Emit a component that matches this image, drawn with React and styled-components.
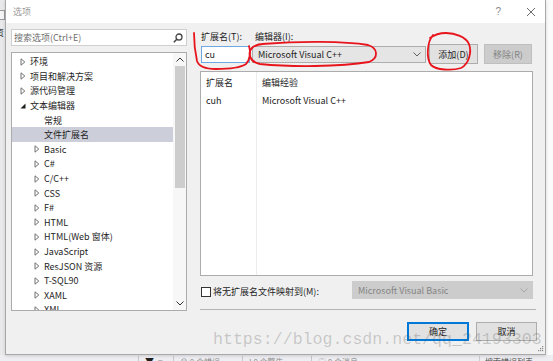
import styled, { createGlobalStyle } from "styled-components";

const UI = `"Noto Sans CJK SC", "Noto Sans", sans-serif`;

const GlobalStyle = createGlobalStyle`
  html, body { margin: 0; padding: 0; }
  body {
    width: 553px;
    height: 361px;
    overflow: hidden;
    background: #f7f7f7;
    font-family: ${UI};
    font-size: 9px;
    color: #1e1e1e;
  }
  #root { position: relative; width: 553px; height: 361px; overflow: hidden; }
`;

const treeItems = [
  { label: "环境", level: 0, arrow: "closed" },
  { label: "项目和解决方案", level: 0, arrow: "closed" },
  { label: "源代码管理", level: 0, arrow: "closed" },
  { label: "文本编辑器", level: 0, arrow: "open" },
  { label: "常规", level: 1 },
  { label: "文件扩展名", level: 1, selected: true },
  { label: "Basic", level: 1, arrow: "closed" },
  { label: "C#", level: 1, arrow: "closed" },
  { label: "C/C++", level: 1, arrow: "closed" },
  { label: "CSS", level: 1, arrow: "closed" },
  { label: "F#", level: 1, arrow: "closed" },
  { label: "HTML", level: 1, arrow: "closed" },
  { label: "HTML(Web 窗体)", level: 1, arrow: "closed" },
  { label: "JavaScript", level: 1, arrow: "closed" },
  { label: "ResJSON 资源", level: 1, arrow: "closed" },
  { label: "T-SQL90", level: 1, arrow: "closed" },
  { label: "XAML", level: 1, arrow: "closed" },
  { label: "XML", level: 1, arrow: "closed" },
];

function Arrow({ kind }) {
  if (kind === "open") {
    return (
      <svg width="6" height="6" viewBox="0 0 6 6">
        <polygon points="5.5,0.5 5.5,5.5 0.5,5.5" fill="#1e1e1e" />
      </svg>
    );
  }
  if (kind === "closed") {
    return (
      <svg width="6" height="8" viewBox="0 0 6 8">
        <polygon points="1,0.8 4.8,4 1,7.2" fill="none" stroke="#717171" strokeWidth="1" />
      </svg>
    );
  }
  return null;
}

const Chevron = ({ color = "#606060", up }) => (
  <svg width="8" height="5" viewBox="0 0 8 5">
    <polyline
      points={up ? "0.5,4.5 4,1 7.5,4.5" : "0.5,0.5 4,4 7.5,0.5"}
      fill="none"
      stroke={color}
      strokeWidth="1"
    />
  </svg>
);

export default function App() {
  return (
    <>
      <GlobalStyle />
      <Backdrop>
        <LeftStrip>
          <StripBox />
          <StripChar>资</StripChar>
        </LeftStrip>
        <Dialog>
          <TitleBar>
            <Title>选项</Title>
            <TitleButtons>
              <TitleGlyph>?</TitleGlyph>
              <svg width="10" height="10" viewBox="0 0 10 10">
                <path d="M1 1 L9 9 M9 1 L1 9" stroke="#6b6b6b" strokeWidth="1" />
              </svg>
            </TitleButtons>
          </TitleBar>
          <Body>
            <LeftPane>
              <Search>
                <Placeholder>搜索选项(Ctrl+E)</Placeholder>
                <svg width="10" height="10" viewBox="0 0 10 10">
                  <circle cx="6" cy="4" r="3" fill="none" stroke="#444" strokeWidth="1.3" />
                  <path d="M3.8 6.2 L0.8 9.2" stroke="#444" strokeWidth="1.6" />
                </svg>
              </Search>
              <Tree>
                <TreeItems>
                  {treeItems.map((it) => (
                    <TreeRow key={it.label} $level={it.level} $selected={it.selected}>
                      <ArrowBox>
                        <Arrow kind={it.arrow} />
                      </ArrowBox>
                      {it.label}
                    </TreeRow>
                  ))}
                </TreeItems>
                <ScrollBar>
                  <ScrollArrow>
                    <Chevron up color="#333" />
                  </ScrollArrow>
                  <Thumb />
                  <ScrollTrack />
                  <ScrollArrow>
                    <Chevron color="#333" />
                  </ScrollArrow>
                </ScrollBar>
              </Tree>
            </LeftPane>

            <RightPane>
              <LabelRow>
                <FieldLabel $w={54}>扩展名(T):</FieldLabel>
                <FieldLabel>编辑器(I):</FieldLabel>
              </LabelRow>
              <FieldRow>
                <ExtInput>cu</ExtInput>
                <Combo $w={174}>
                  Microsoft Visual C++
                  <Chevron />
                </Combo>
                <ButtonGroup>
                  <Button $w={49}>添加(D)</Button>
                  <Button $w={48} $disabled>
                    移除(R)
                  </Button>
                </ButtonGroup>
              </FieldRow>

              <ListView>
                <Column $w={55} $divider>
                  <Cell>扩展名</Cell>
                  <Cell>cuh</Cell>
                </Column>
                <Column>
                  <Cell>编辑经验</Cell>
                  <Cell>Microsoft Visual C++</Cell>
                </Column>
              </ListView>

              <MapRow>
                <CheckBox />
                <CheckLabel>将无扩展名文件映射到(M):</CheckLabel>
                <Combo $w={181} $disabled>
                  Microsoft Visual Basic
                  <Chevron color="#a6a6a6" />
                </Combo>
              </MapRow>

              <Separator />

              <ButtonRow>
                <Button $w={62} $h={19} $default>
                  确定
                </Button>
                <Button $w={61} $h={19}>
                  取消
                </Button>
              </ButtonRow>
            </RightPane>
          </Body>
          <Grip>
            <svg width="6" height="6" viewBox="0 0 6 6" fill="#8a8a8a">
              <rect x="4" y="0" width="1.2" height="1.2" />
              <rect x="2" y="2" width="1.2" height="1.2" />
              <rect x="4" y="2" width="1.2" height="1.2" />
              <rect x="0" y="4" width="1.2" height="1.2" />
              <rect x="2" y="4" width="1.2" height="1.2" />
              <rect x="4" y="4" width="1.2" height="1.2" />
            </svg>
          </Grip>
        </Dialog>
        <RightStrip />
      </Backdrop>

      <StatusBar>
        <StatusSep />
        <StatusIcon>▼</StatusIcon>
        <StatusIcon $light>▾</StatusIcon>
        <StatusSep />
        <StatusItem>⊗ 0 个错误</StatusItem>
        <StatusSep />
        <StatusItem>! 0 个警告</StatusItem>
        <StatusSep />
        <StatusItem>ⓘ 0 个消息</StatusItem>
        <StatusSearch>搜索错误列表</StatusSearch>
      </StatusBar>

      <Watermark>https://blog.csdn.net/qq_24193303</Watermark>

      <Marks width="553" height="361" viewBox="0 0 553 361">
        <g fill="none" stroke="#e8141c" strokeWidth="1.8" strokeLinecap="round" strokeLinejoin="round">
          <path d="M194 33 C194 42 195 52 197 61 C199 67 206 69 216 69 C228 69 240 68 246 64 C250 60 251 52 249 46" />
          <path d="M262 44 C300 41 345 41 368 45 C378 48 379 58 369 62 C340 67 290 67 260 64 C249 62 247 52 253 47 C256 45 259 44 263 44" />
          <path d="M433 35 C427 42 426 58 431 65 C436 70 452 71 461 68 C469 64 472 52 469 44 C466 37 455 33 446 33 C440 33 434 35 430 38" />
        </g>
      </Marks>
    </>
  );
}

const Backdrop = styled.div`
  display: flex;
  height: 355px;
`;

const LeftStrip = styled.div`
  width: 5px;
  background: #e9e9ec;
  overflow: hidden;
  display: flex;
  flex-direction: column;
`;

const StripBox = styled.div`
  margin-top: 10px;
  height: 8px;
  width: 4px;
  border: 1px solid #9a9a9a;
  border-left: none;
  background: #f5f5f5;
`;

const StripChar = styled.div`
  margin-top: 6px;
  margin-left: -5px;
  font-size: 9px;
  color: #333;
`;

const RightStrip = styled.div`
  flex: 1;
  background: #fbfbfb;
`;

const Dialog = styled.div`
  position: relative;
  width: 541px;
  height: 355px;
  box-sizing: border-box;
  border: 1px solid #a8a8a8;
  border-top: none;
  background: #f0f0f0;
  display: flex;
  flex-direction: column;
  box-shadow: 0 1px 3px rgba(0, 0, 0, 0.15);
`;

const TitleBar = styled.div`
  height: 23px;
  background: #ffffff;
  display: flex;
  align-items: center;
  justify-content: space-between;
  padding: 0 9px 0 7px;
`;

const Title = styled.span`
  color: #9a9a9a;
  font-size: 9px;
`;

const TitleButtons = styled.div`
  display: flex;
  align-items: center;
  gap: 25px;
`;

const TitleGlyph = styled.span`
  color: #8a8a8a;
  font-size: 10px;
  font-family: "Liberation Sans", sans-serif;
`;

const Body = styled.div`
  flex: 1;
  display: flex;
  padding: 6px 0 0 5px;
`;

const LeftPane = styled.div`
  width: 176px;
  display: flex;
  flex-direction: column;
  gap: 6px;
`;

const Search = styled.div`
  height: 17px;
  box-sizing: border-box;
  border: 1px solid #cfcfcf;
  background: #fff;
  display: flex;
  align-items: center;
  justify-content: space-between;
  padding: 0 3px 0 2px;
`;

const Placeholder = styled.span`
  color: #6f6f6f;
`;

const Tree = styled.div`
  height: 259px;
  box-sizing: border-box;
  border: 1px solid #acacac;
  background: #fff;
  display: flex;
`;

const TreeItems = styled.div`
  flex: 1;
  overflow: hidden;
  padding-top: 1.5px;
`;

const TreeRow = styled.div`
  height: 14.6px;
  display: flex;
  align-items: center;
  padding-left: ${(p) => 8 + p.$level * 14}px;
  background: ${(p) => (p.$selected ? "#ccced9" : "transparent")};
  white-space: nowrap;
  color: #1e1e1e;
`;

const ArrowBox = styled.span`
  width: 10px;
  display: inline-flex;
  align-items: center;
  flex-shrink: 0;
`;

const ScrollBar = styled.div`
  width: 13px;
  background: #f7f7f7;
  display: flex;
  flex-direction: column;
  align-items: center;
`;

const ScrollArrow = styled.div`
  height: 13px;
  display: flex;
  align-items: center;
  justify-content: center;
`;

const Thumb = styled.div`
  width: 10px;
  height: 122px;
  background: #cdcdcd;
`;

const ScrollTrack = styled.div`
  flex: 1;
`;

const RightPane = styled.div`
  margin-left: 13px;
  width: 337px;
  display: flex;
  flex-direction: column;
  padding-top: 1px;
`;

const LabelRow = styled.div`
  display: flex;
  height: 12px;
  align-items: center;
  padding-left: 1px;
`;

const FieldLabel = styled.span`
  width: ${(p) => (p.$w ? `${p.$w}px` : "auto")};
  color: #1e1e1e;
`;

const FieldRow = styled.div`
  display: flex;
  align-items: center;
  height: 20px;
  margin-top: 2px;
  padding-left: 1px;
`;

const ExtInput = styled.div`
  width: 49px;
  height: 17px;
  box-sizing: border-box;
  border: 1px solid #6ea9e4;
  background: #fff;
  padding-left: 3px;
  display: flex;
  align-items: center;
`;

const Combo = styled.div`
  width: ${(p) => p.$w}px;
  height: ${(p) => (p.$disabled ? 18 : 17)}px;
  box-sizing: border-box;
  margin-left: ${(p) => (p.$disabled ? "auto" : "2px")};
  border: 1px solid ${(p) => (p.$disabled ? "#cccccc" : "#adadad")};
  background: ${(p) => (p.$disabled ? "#cccccc" : "#e5e5e5")};
  color: ${(p) => (p.$disabled ? "#858585" : "#1e1e1e")};
  display: flex;
  align-items: center;
  justify-content: space-between;
  padding: 0 4px 0 5px;
`;

const ButtonGroup = styled.div`
  display: flex;
  gap: 6px;
  margin-left: 3px;
`;

const Button = styled.div`
  width: ${(p) => p.$w}px;
  height: ${(p) => p.$h || 20}px;
  box-sizing: border-box;
  display: flex;
  align-items: center;
  justify-content: center;
  background: ${(p) => (p.$disabled ? "#cccccc" : "#e1e1e1")};
  border: 1px solid ${(p) => (p.$default ? "#0078d7" : p.$disabled ? "#bfbfbf" : "#adadad")};
  box-shadow: ${(p) => (p.$default ? "inset 0 0 0 1px #0078d7" : "none")};
  color: ${(p) => (p.$disabled ? "#838383" : "#1e1e1e")};
`;

const ListView = styled.div`
  margin-top: 7px;
  width: 333px;
  height: 205px;
  box-sizing: border-box;
  border: 1px solid #acacac;
  background: #fff;
  display: flex;
`;

const Column = styled.div`
  width: ${(p) => (p.$w ? `${p.$w}px` : "auto")};
  flex: ${(p) => (p.$w ? "none" : 1)};
  border-right: ${(p) => (p.$divider ? "1px solid #ececec" : "none")};
  padding-top: 1px;
`;

const Cell = styled.div`
  height: 18px;
  display: flex;
  align-items: center;
  padding-left: 5px;
  white-space: nowrap;
`;

const MapRow = styled.div`
  width: 333px;
  height: 18px;
  margin-top: 5px;
  display: flex;
  align-items: center;
  padding-left: 1px;
  box-sizing: border-box;
`;

const CheckBox = styled.div`
  width: 10px;
  height: 10px;
  box-sizing: border-box;
  border: 1px solid #333;
  background: #fff;
  margin-top: 3px;
`;

const CheckLabel = styled.span`
  margin-left: 2px;
  margin-top: 3px;
`;

const Separator = styled.div`
  width: 336px;
  margin-top: 10px;
  border-top: 1px solid #b4b4b4;
`;

const ButtonRow = styled.div`
  margin-top: 12px;
  display: flex;
  justify-content: flex-end;
  gap: 7px;
`;

const Grip = styled.div`
  position: absolute;
  right: 1px;
  bottom: 2px;
  line-height: 0;
`;

const StatusBar = styled.div`
  height: 6px;
  background: #eeeef2;
  display: flex;
  align-items: flex-start;
  padding-left: 132px;
  font-size: 8px;
  color: #555;
  white-space: nowrap;
`;

const StatusSep = styled.span`
  width: 1px;
  height: 10px;
  background: #c6c6c6;
  margin: 1px 6px 0;
`;

const StatusIcon = styled.span`
  font-size: 9px;
  margin-top: 0;
  color: ${(p) => (p.$light ? "#888" : "#1e1e1e")};
  margin-right: 4px;
`;

const StatusItem = styled.span`
  margin-top: 1px;
  width: 56px;
  color: #8a8a8a;
`;

const StatusSearch = styled.span`
  margin-left: auto;
  margin-right: 20px;
  margin-top: 1px;
  padding-left: 5px;
  border-left: 1px solid #ccc;
  color: #444;
`;

const Watermark = styled.div`
  position: absolute;
  left: 213px;
  top: 331px;
  font-family: "Liberation Mono", monospace;
  font-size: 16.6px;
  line-height: 17px;
  color: rgba(90, 90, 90, 0.28);
  white-space: nowrap;
  pointer-events: none;
`;

const Marks = styled.svg`
  position: absolute;
  left: 0;
  top: 0;
  pointer-events: none;
`;
